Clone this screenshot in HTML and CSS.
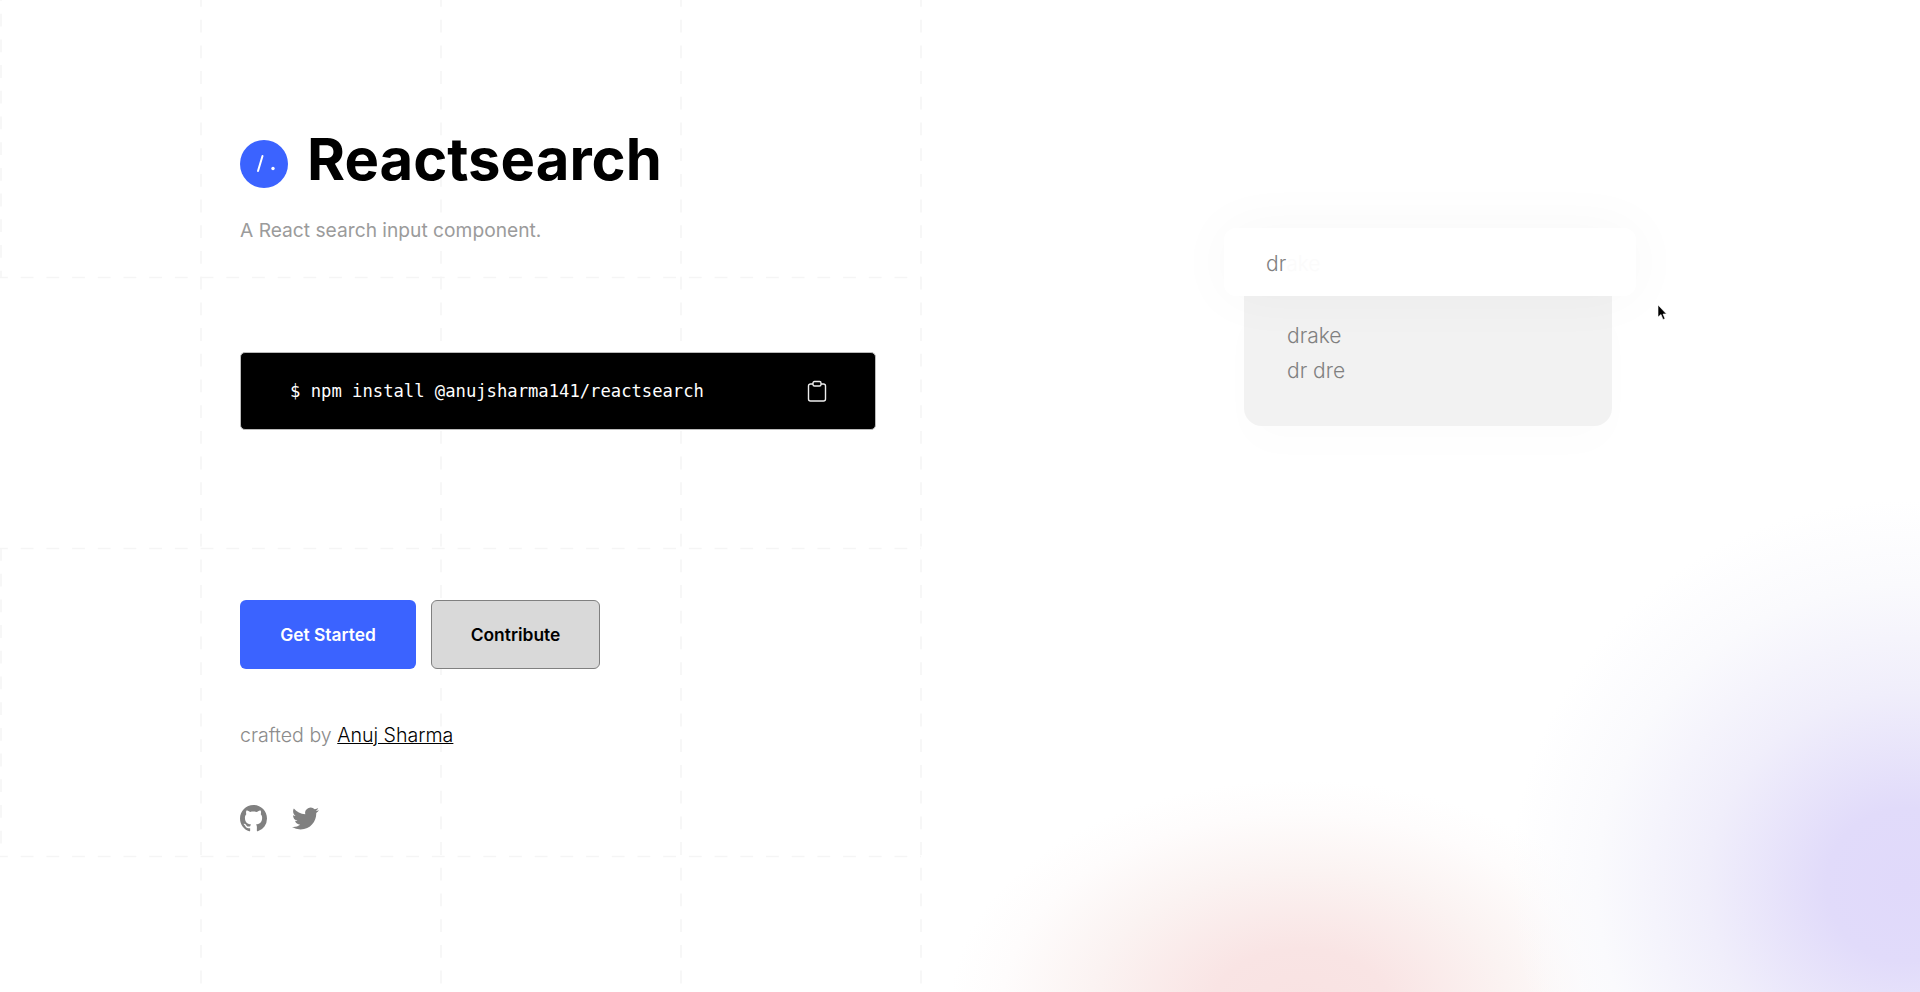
FILE: index.html
```html
<!DOCTYPE html>
<html lang="en">
<head>
<meta charset="utf-8">
<title>Reactsearch</title>
<link rel="stylesheet" href="styles.css">
</head>
<body>
<div class="backdrop"></div>
<svg class="grid-lines" width="1920" height="992" viewBox="0 0 1920 992">
  <g class="dash">
    <path d="M1 -12V277M1 548V857"/>
    <path d="M201 -6V992M441 -6V992M681 -6V992M921 -6V992"/>
    <path d="M-5 277.500H921M-5 548.500H921M-5 856.500H921"/>
  </g>
</svg>
<main class="page">
  <section class="intro">
    <header class="brand">
      <span class="logo"><svg width="48" height="48" viewBox="0 0 48 48"><circle cx="24" cy="24" r="24" fill="#3b63ff"/><path d="M18 31L22.500 16" stroke="#fff" stroke-width="2" stroke-linecap="round" fill="none"/><circle cx="33" cy="28.500" r="1.700" fill="#fff"/></svg></span>
      <h1 class="title">Reactsearch</h1>
    </header>
    <p class="tagline">A React search input component.</p>
    <div class="install">
      <code class="command">$ npm install @anujsharma141/reactsearch</code>
      <svg class="clip" width="20" height="22" viewBox="0 0 20 22" fill="none" stroke="#eee" stroke-width="1.400"><path d="M6 4H3.500a2 2 0 0 0-2 2v13a2 2 0 0 0 2 2h13a2 2 0 0 0 2-2V6a2 2 0 0 0-2-2H14"/><rect x="6" y="1.500" width="8" height="4.500" rx="1.500"/></svg>
    </div>
    <div class="actions">
      <a class="btn btn-primary">Get Started</a>
      <a class="btn btn-secondary">Contribute</a>
    </div>
    <p class="credit">crafted by <a class="author">Anuj Sharma</a></p>
    <div class="social">
      <svg width="27" height="27" viewBox="0 0 16 16" fill="#808080"><path d="M8 0C3.580 0 0 3.580 0 8c0 3.540 2.290 6.530 5.470 7.590.4.070.55-.17.55-.38 0-.19-.01-.82-.01-1.490-2.010.37-2.530-.49-2.690-.94-.09-.23-.48-.94-.82-1.130-.28-.15-.68-.52-.01-.53.63-.01 1.080.58 1.230.82.720 1.210 1.870.870 2.330.660.070-.520.280-.870.510-1.070-1.780-.200-3.640-.890-3.640-3.950 0-.870.310-1.590.820-2.150-.080-.200-.360-1.020.080-2.120 0 0 .670-.210 2.200.820.640-.180 1.320-.270 2-.270.680 0 1.360.090 2 .270 1.530-1.040 2.200-.820 2.200-.820.440 1.100.160 1.920.080 2.120.510.560.820 1.270.820 2.150 0 3.070-1.870 3.750-3.650 3.950.290.250.540.730.540 1.480 0 1.070-.010 1.930-.010 2.200 0 .210.150.460.550.380A8.013 8.013 0 0 0 16 8c0-4.420-3.580-8-8-8z"/></svg>
      <svg width="27" height="27" viewBox="0 0 24 24" fill="#808080"><path d="M23.950 4.570a10 10 0 0 1-2.820.770 4.960 4.960 0 0 0 2.160-2.720c-.950.550-2 .950-3.130 1.180a4.920 4.920 0 0 0-8.380 4.480C7.690 8.090 4.070 6.130 1.640 3.160a4.820 4.820 0 0 0-.670 2.480c0 1.710.870 3.210 2.190 4.100a4.900 4.900 0 0 1-2.230-.620v.060a4.920 4.920 0 0 0 3.950 4.830 5 5 0 0 1-2.210.080 4.940 4.940 0 0 0 4.610 3.420A9.880 9.880 0 0 1 0 19.540a14 14 0 0 0 7.560 2.210c9.050 0 14-7.500 14-13.980 0-.210 0-.420-.020-.630a9.940 9.940 0 0 0 2.460-2.550z"/></svg>
    </div>
  </section>
  <section class="demo">
    <div class="search">
      <div class="search-box"><span class="typed">dr</span><span class="ghost">ake</span></div>
      <ul class="suggestions">
        <li>drake</li>
        <li>dr dre</li>
      </ul>
    </div>
  </section>
</main>
<svg class="cursor" width="10" height="16" viewBox="0 0 10 16"><path d="M1 0v12l3-2.500 2 5 2-.800-2-4.700h3.500z" fill="#000" stroke="#fff" stroke-width=".6"/></svg>
</body>
</html>
```

FILE: styles.css
```css
* { box-sizing: border-box; }
html, body { margin: 0; height: 100%; }
body {
  position: relative;
  width: 1920px;
  height: 992px;
  overflow: hidden;
  background: #fff;
  font-family: Inter, "Liberation Sans", sans-serif;
  color: #000;
}
.backdrop {
  position: absolute; inset: 0;
  background:
    radial-gradient(ellipse 395px 385px at 1905px 885px, #e0d9fa 0%, #e1dbfa 20%, #f0eefb 50%, #fafafd 78%, rgba(255,255,255,0) 100%),
    radial-gradient(ellipse 350px 225px at 1300px 1005px, #f9e2e2 0%, #f9e4e4 25%, #fbf3f2 60%, #fefcfc 85%, rgba(255,255,255,0) 100%);
}
.grid-lines { position: absolute; left: 0; top: 0; }
.dash path { stroke: #f5f5f5; stroke-width: 1.500; stroke-dasharray: 12.800 12.900; fill: none; }
.page { position: relative; display: grid; grid-template-columns: 1200px 720px; height: 992px; }
.intro { padding: 127px 0 0 240px; }
.brand { display: flex; align-items: flex-end; gap: 19px; height: 64px; }
.logo { display: block; height: 48px; margin-bottom: 3px; }
.title { margin: 0; font-size: 58px; line-height: 64px; font-weight: 700; }
.tagline { margin: 25px 0 0; font-size: 19.200px; line-height: 28px; color: #9b9b9b; }
.install {
  display: flex; align-items: center; justify-content: space-between;
  width: 636px; height: 78px; margin-top: 108px; padding: 0 48px 0 49px;
  background: #000; border: 1px solid #bbb; border-radius: 5px;
}
.command { font-family: "DejaVu Sans Mono", monospace; font-size: 17.200px; color: #fff; }
.actions { display: flex; gap: 15px; margin-top: 170px; }
.btn {
  display: flex; align-items: center; justify-content: center;
  height: 69px; border-radius: 6px; font-size: 17.400px; font-weight: 600;
}
.btn-primary { width: 176px; background: #3b63ff; color: #fff; }
.btn-secondary { width: 169px; background: #d9d9d9; color: #000; border: 1px solid #808080; }
.credit { margin: 52px 0 0; font-size: 19.600px; line-height: 28px; font-weight: 300; color: #8c8c8c; }
.author { color: #000; text-decoration: underline; }
.social { display: flex; gap: 25px; margin-top: 56px; }
.demo { padding: 228px 0 0 24px; }
.search { width: 412px; }
.search-box {
  position: relative; z-index: 1;
  height: 68px; padding: 2px 42px 0;
  display: flex; align-items: center;
  background: #fff; border-radius: 12px;
  box-shadow: 0 0 60px rgba(0,0,0,.035);
  font-family: Inter, sans-serif; font-size: 21px; font-weight: 300;
}
.typed { color: #808080; }
.ghost { color: #fbfbfb; }
.suggestions {
  list-style: none; margin: 0 0 0 20px; width: 368px; height: 130px;
  padding: 22px 43px;
  background: #f2f2f2; border-radius: 0 0 18px 18px;
  box-shadow: 0 20px 40px rgba(0,0,0,.012);
  font-family: Inter, sans-serif; font-size: 21px; font-weight: 300; line-height: 35px; color: #808080;
}
.cursor { position: absolute; left: 1657px; top: 305px; }
```
